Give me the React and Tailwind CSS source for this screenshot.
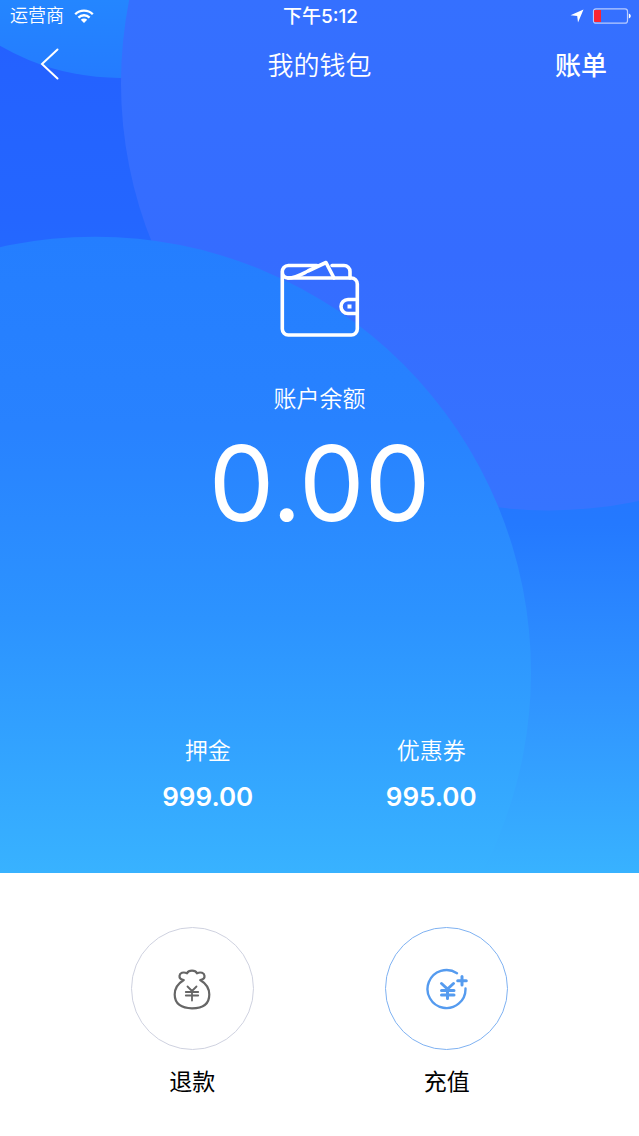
function Backdrop() {
  return (
    <svg
      className="absolute inset-0 h-full w-full"
      viewBox="0 0 639 874"
      preserveAspectRatio="none"
      aria-hidden="true"
    >
      <defs>
        <linearGradient id="base" gradientUnits="userSpaceOnUse" x1="0" y1="0" x2="0" y2="874">
          <stop offset="0" stopColor="#2460ff" />
          <stop offset="0.25" stopColor="#2466ff" />
          <stop offset="0.6" stopColor="#2479ff" />
          <stop offset="0.8" stopColor="#3094ff" />
          <stop offset="1" stopColor="#38b2ff" />
        </linearGradient>
        <linearGradient id="corner" gradientUnits="userSpaceOnUse" x1="0" y1="0" x2="0" y2="80">
          <stop offset="0" stopColor="#2486ff" />
          <stop offset="1" stopColor="#247bff" />
        </linearGradient>
        <linearGradient id="upper" gradientUnits="userSpaceOnUse" x1="0" y1="0" x2="0" y2="511">
          <stop offset="0" stopColor="#3570ff" />
          <stop offset="0.5" stopColor="#356cff" />
          <stop offset="1" stopColor="#3674ff" />
        </linearGradient>
        <linearGradient id="lower" gradientUnits="userSpaceOnUse" x1="0" y1="237" x2="0" y2="874">
          <stop offset="0" stopColor="#247eff" />
          <stop offset="0.3" stopColor="#2882ff" />
          <stop offset="0.6" stopColor="#2c93ff" />
          <stop offset="1" stopColor="#38b2ff" />
        </linearGradient>
      </defs>
      <rect width="639" height="874" fill="url(#base)" />
      <circle cx="120" cy="-162" r="240" fill="url(#corner)" />
      <circle cx="549" cy="83" r="428" fill="url(#upper)" />
      <circle cx="95" cy="673" r="436" fill="url(#lower)" />
    </svg>
  );
}

function StatusBar() {
  return (
    <div className="grid h-8 grid-cols-3 items-center pl-[10px] pr-2 text-lg leading-none">
      <div className="flex items-center gap-[10px] font-[350]">
        <span>运营商</span>
        <svg width="20" height="16" viewBox="0 0 20 16" fill="none" stroke="currentColor" strokeWidth="2.3" aria-hidden="true">
          <path d="M1.2 6.2a12.4 12.4 0 0 1 17.6 0" />
          <path d="M4.4 9.6a7.9 7.9 0 0 1 11.2 0" />
          <path d="M10 15 6.8 11.8a4.6 4.6 0 0 1 6.4 0Z" fill="currentColor" stroke="none" />
        </svg>
      </div>
      <time className="text-center text-[19px] leading-none font-medium">下午5:12</time>
      <div className="flex items-center justify-end gap-2">
        <svg width="14" height="14" viewBox="0 0 14 14" fill="currentColor" aria-hidden="true">
          <path d="M13.5.5 8 13.5 7.2 7 .5 6.2Z" />
        </svg>
        <svg width="39" height="16" viewBox="0 0 39 16" aria-hidden="true">
          <rect x="1.5" y=".8" width="34" height="14.4" rx="2.5" fill="none" stroke="#b9ccff" strokeWidth="1.2" />
          <path d="M3 2h6v12H3a1 1 0 0 1-1-1V3a1 1 0 0 1 1-1Z" fill="#fb2432" />
          <path d="M36.8 5.500c2.600.9 2.600 4.100 0 5Z" fill="#fff" />
        </svg>
      </div>
    </div>
  );
}

function NavBar() {
  return (
    <header className="grid h-16 grid-cols-[1fr_auto_1fr] items-center px-8 text-[26px] leading-8">
      <button type="button" aria-label="返回" className="justify-self-start p-2">
        <svg width="20" height="32" viewBox="0 0 20 32" fill="none" stroke="currentColor" strokeWidth="2" strokeLinecap="round" aria-hidden="true">
          <path d="M17.5 1.500 2 16l15.500 14.500" />
        </svg>
      </button>
      <h1 className="pt-1 font-[350]">我的钱包</h1>
      <button type="button" className="justify-self-end pt-1 font-medium">账单</button>
    </header>
  );
}

function WalletIcon() {
  return (
    <svg width="80" height="78" viewBox="0 0 80 78" fill="none" stroke="currentColor" strokeWidth="3.6" strokeLinejoin="round" strokeLinecap="round" aria-hidden="true">
      <path d="M2.300 11v58a6 6 0 0 0 6 6h63a6 6 0 0 0 6-6V24a6 6 0 0 0-6-6H8a6 6 0 0 1-5.700-6 6 6 0 0 1 6-6.500H37" />
      <path d="M52 5.500h12a6 6 0 0 1 6 6V18" />
      <path d="M8 18c8 0 14-4 20-7L46 2.500l8 15.500" />
      <path d="M77 39.500H68a7 7 0 0 0 0 14h9" />
      <rect x="67.500" y="44.500" width="4" height="4" fill="currentColor" stroke="none" />
    </svg>
  );
}

function Stat({ label, value }) {
  return (
    <div className="flex flex-col items-center gap-[18px]">
      <dt className="text-[23px] leading-7 font-[350]">{label}</dt>
      <dd className="text-[26px] leading-7 font-semibold">{value}</dd>
    </div>
  );
}

function RefundIcon() {
  return (
    <svg width="38" height="42" viewBox="0 0 38 42" fill="none" stroke="#666" strokeWidth="2.200" strokeLinecap="round" strokeLinejoin="round" aria-hidden="true">
      <path d="M10.800 12C7.500 11.500 6.300 9.800 6.500 7.800 6.800 5 10.300 3.500 14 5.300 14.800 3.600 16.600 2.600 19 2.600s4.200 1 5 2.700c3.700-1.800 7.200-.3 7.500 2.500.2 2-1 3.700-4.300 4.200C33 15.500 36.300 20.500 36.300 26.500 36.300 36 29.500 40.300 19 40.300S1.700 36 1.700 26.500c0-6 3.300-11 9.100-14.500Z" />
      <path d="m14.500 18.500 4.500 4.500 4.500-4.500M12.800 24h12.400M12.800 27.500h12.400M19 23v9.500" strokeWidth="1.800" />
    </svg>
  );
}

function RechargeIcon() {
  return (
    <svg width="42" height="42" viewBox="0 0 42 42" fill="none" stroke="#559bef" strokeWidth="2.400" strokeLinecap="round" aria-hidden="true">
      <path d="M31 5.200A19 19 0 1 0 39.500 20.500" />
      <path d="M36 8.400v8.600M31.700 12.700h8.600" strokeWidth="3" />
      <path d="m15.500 15.500 6 5.500 6-5.500M15.500 22.500h12.500M15.500 27h12.500M21.500 22v8.500" strokeWidth="3" />
    </svg>
  );
}

function Action({ label, ring, children }) {
  return (
    <button type="button" className="flex flex-col items-center gap-[18px]">
      <span className={`flex size-[123px] items-center justify-center rounded-full border ${ring}`}>
        {children}
      </span>
      <span className="text-[23px] leading-7">{label}</span>
    </button>
  );
}

export default function App() {
  return (
    <div className="flex min-h-screen flex-col bg-white font-['Inter','Noto_Sans_CJK_SC',sans-serif] text-black">
      <section className="relative text-white">
        <Backdrop />
        <div className="relative">
          <StatusBar />
          <NavBar />
          <main className="flex flex-col items-center pt-[164px]">
            <WalletIcon />
            <p className="mt-[47px] text-[23px] leading-7 font-[350]">账户余额</p>
            <p className="mt-[14px] text-[104px] leading-[112px]">0.00</p>
          </main>
          <dl className="grid grid-cols-2 px-24 pt-[198px] pb-[62px]">
            <Stat label="押金" value="999.00" />
            <Stat label="优惠券" value="995.00" />
          </dl>
        </div>
      </section>
      <nav className="grid grid-cols-2 px-[65px] pt-[54px] pb-10">
        <Action label="退款" ring="border-[#cfd2e0]">
          <RefundIcon />
        </Action>
        <Action label="充值" ring="border-[#7fb2f2]">
          <RechargeIcon />
        </Action>
      </nav>
    </div>
  );
}
